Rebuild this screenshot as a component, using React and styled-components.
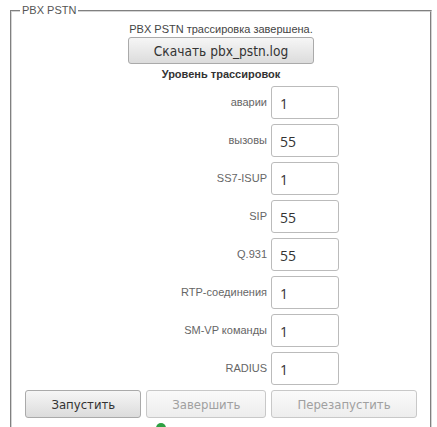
import React from 'react'
import styled, { createGlobalStyle } from 'styled-components'

const levels = [
  { label: 'аварии', value: '1' },
  { label: 'вызовы', value: '55' },
  { label: 'SS7-ISUP', value: '1' },
  { label: 'SIP', value: '55' },
  { label: 'Q.931', value: '55' },
  { label: 'RTP-соединения', value: '1' },
  { label: 'SM-VP команды', value: '1' },
  { label: 'RADIUS', value: '1' },
]

const App = () => {
  return (
    <Page>
      <GlobalStyle />
      <Fieldset>
        <Legend>PBX PSTN</Legend>
        <Status>PBX PSTN трассировка завершена.</Status>
        <Center>
          <Button $large>Скачать pbx_pstn.log</Button>
        </Center>
        <Title>Уровень трассировок</Title>
        <Levels>
          {levels.map((l) => (
            <React.Fragment key={l.label}>
              <Label>{l.label}</Label>
              <Input defaultValue={l.value} />
            </React.Fragment>
          ))}
        </Levels>
        <Actions>
          <Button>Запустить</Button>
          <Button disabled>Завершить</Button>
          <Button disabled>Перезапустить</Button>
        </Actions>
        <Indicator>
          <Dot />
        </Indicator>
      </Fieldset>
    </Page>
  )
}

const GlobalStyle = createGlobalStyle`
  body {
    margin: 0;
    background: #fff;
    font-family: "Liberation Sans", Arial, sans-serif;
  }
`

const Page = styled.div`
  padding: 4px 0 0 10px;
  height: 427px;
  overflow: hidden;
`

const Fieldset = styled.fieldset`
  box-sizing: border-box;
  width: 422px;
  margin: 0;
  padding: 0 8px 20px;
  border: 2px groove #d4d4d4;
`

const Legend = styled.legend`
  padding: 0 2px;
  font-size: 11px;
  line-height: 13px;
  color: #555;
`

const Status = styled.div`
  margin-top: 6px;
  font-size: 11px;
  line-height: 13px;
  color: #444;
  text-align: center;
`

const Center = styled.div`
  display: flex;
  justify-content: center;
  margin-top: 1px;
`

const Button = styled.button`
  height: ${(p) => (p.$large ? '27px' : '28px')};
  padding: 0 25px;
  font-family: "DejaVu Sans Condensed", "DejaVu Sans", sans-serif;
  font-size: ${(p) => (p.$large ? '13.6px' : '13px')};
  color: #333;
  background: linear-gradient(#f6f6f6, #dcdcdc);
  border: 1px solid #aaa;
  border-radius: 3px;

  &:disabled {
    color: #a0a0a0;
    background: linear-gradient(#fafafa, #ededed);
    border-color: #c8c8c8;
  }
`

const Title = styled.div`
  margin-top: 4px;
  font-size: 11px;
  line-height: 13px;
  font-weight: bold;
  color: #333;
  text-align: center;
`

const Levels = styled.div`
  display: grid;
  grid-template-columns: 1fr 68px;
  column-gap: 4px;
  row-gap: 5px;
  align-items: center;
  margin-top: 5px;
  padding-right: 83px;
`

const Label = styled.span`
  font-size: 11px;
  color: #666;
  text-align: right;
  margin-top: -2px;
`

const Input = styled.input`
  box-sizing: border-box;
  width: 68px;
  height: 33px;
  padding: 2px 8px 0;
  font-family: "Open Sans", sans-serif;
  font-size: 14px;
  color: #333;
  border: 1px solid #bbb;
  border-radius: 3px;
`

const Actions = styled.div`
  display: flex;
  justify-content: center;
  gap: 5px;
  margin-top: 5px;
`

const Indicator = styled.div`
  padding: 5px 0 0 136px;
`

const Dot = styled.div`
  width: 10px;
  height: 10px;
  border-radius: 50%;
  background: #2ea043;
`

export default App
